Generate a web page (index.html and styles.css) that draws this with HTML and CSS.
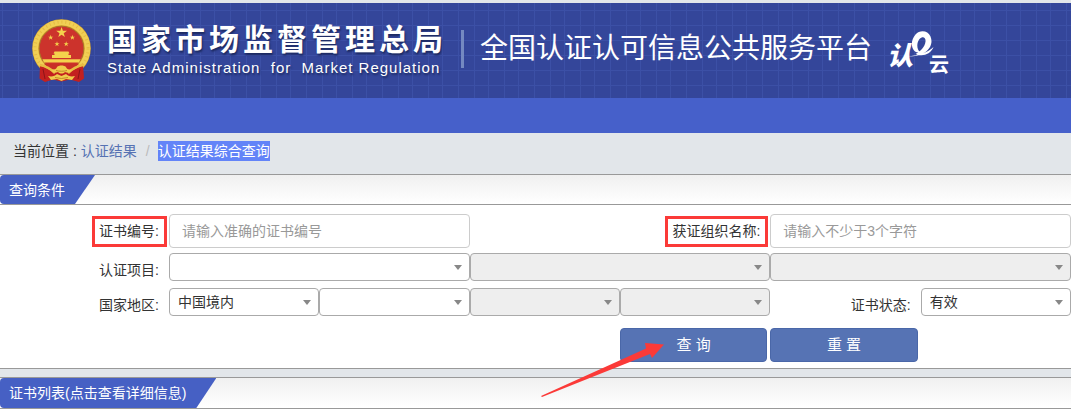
FILE: index.html
```html
<!DOCTYPE html>
<html lang="zh-CN">
<head>
  <meta charset="utf-8">
  <title>全国认证认可信息公共服务平台</title>
  <link rel="stylesheet" href="styles.css">
</head>
<body>
  <header class="banner">
    <svg class="emblem" viewBox="0 0 60 64" aria-hidden="true">
      <defs>
        <path id="star" d="M0-5.6 1.3-1.7H5.4L2.1.7 3.3 4.6 0 2.2-3.3 4.6-2.1.7-5.4-1.7H-1.3Z"/>
      </defs>
      <circle cx="29.5" cy="29.5" r="29.3" fill="#d9a62e"/>
      <circle cx="29.5" cy="29.5" r="26" fill="none" stroke="#f0cf55" stroke-width="5.5"/>
      <circle cx="29.5" cy="29.5" r="26.5" fill="none" stroke="#e6ba42" stroke-width="3" stroke-dasharray="1 3"/>
      <circle cx="29.5" cy="29.5" r="22.3" fill="#cc332c" stroke="#a8702a" stroke-width="1"/>
      <g fill="#f4d24c">
        <use href="#star" transform="translate(29.6 13.5)"/>
        <use href="#star" transform="translate(18.7 18.5) scale(.48)"/>
        <use href="#star" transform="translate(40.4 18.5) scale(.48)"/>
        <use href="#star" transform="translate(25 25) scale(.48)"/>
        <use href="#star" transform="translate(34.2 25) scale(.48)"/>
        <path d="M22.5 32.5h14l1 2h-1v1.5h2.5v3h-19v-3h2.5v-1.5h-1z"/>
        <path d="M10.500 40.200h38l-1.500 3.400h-35z"/>
      </g>
      <path d="M12 44.800h35l-6 6h-23z" fill="#c92f27"/>
      <path d="M8 45.500c4 3 8 4 13 7.500h17c5-3.500 9-4.500 13-7.500l1 14-5 3.500-9-2.500-8.500 2-8.500-2-8 2.500-5.500-3.500z" fill="#c3201f"/>
      <path d="M8 46c5 1 10 3 15 8M51 46c-5 1-10 3-15 8" fill="none" stroke="#e7bc42" stroke-width="2.500"/>
      <path d="M19 51c3-1 5 0 6-3 2-2 7-2 9 0 1 3 3 2 6 3-2 3-5 3-7 2-2 2-5 2-7 0-3 1-5 1-7-2z" fill="#f0cb4c"/>
      <path d="M16 57c4 1 7 0 9-2l4.500 2 4.500-2c2 2 5 3 9 2l-3 4-6-1-4.500 2-4.500-2-6 1z" fill="#f0cb4c"/>
      <path d="M24 51.500c3 1 8 1 11 0M23 58.500l6.500 1 6.500-1" fill="none" stroke="#b9781f" stroke-width=".8"/>
      <path d="M11 50l2 10M48 50l-2 10" stroke="#8d1418" stroke-width="1"/>
    </svg>
    <div class="agency">
      <span class="agency-cn">国家市场监督管理总局</span>
      <span class="agency-en">State Administration&nbsp; for&nbsp; Market Regulation</span>
    </div>
    <h1 class="platform">全国认证认可信息公共服务平台</h1>
    <svg class="cloud-logo" viewBox="0 0 66 48" role="img" aria-label="认e云">
      <text class="logo-ren" x="0" y="34">认</text>
      <path d="M20 25.500c7 .2 13-1 18.500-4.500 5-3.500 7.500-9.500 5-15.500-2.500-6-10.500-7-15-2-4 4.500-5 12-1.500 16 1.500 1.800 4 2.200 6 1.500-3.500-2.500-3.500-9.500-.5-13 3-3.300 6.500-2 6 2.500-.5 5.500-5.500 10-10 12.500 7 3 15 .5 18-7-5 5-14 8.500-26.500 9.500z" fill="#fff"/>
      <text class="logo-yun" x="42" y="41">云</text>
    </svg>
  </header>
  <nav class="navbar"></nav>

  <div class="breadcrumb">
    <span>当前位置 :</span>
    <a href="#">认证结果</a>
    <span class="slash">/</span>
    <span class="current">认证结果综合查询</span>
  </div>

  <section class="panel">
    <div class="panel-head"><h2 class="panel-tab">查询条件</h2></div>
    <form class="search-form">
      <div class="row">
        <label class="name" for="certNo"><span class="marked">证书编号:</span></label>
        <input class="field span2" type="text" id="certNo" placeholder="请输入准确的证书编号">
        <label class="name span2" for="orgName"><span class="marked">获证组织名称:</span></label>
        <input class="field span2" type="text" id="orgName" placeholder="请输入不少于3个字符">
      </div>
      <div class="row">
        <label class="name low" for="project">认证项目:</label>
        <select class="pick span2" id="project"><option></option></select>
        <select class="pick span2" aria-label="认证项目二级" disabled><option></option></select>
        <select class="pick span2" aria-label="认证项目三级" disabled><option></option></select>
      </div>
      <div class="row region">
        <label class="name low" for="country">国家地区:</label>
        <select class="pick" id="country"><option>中国境内</option></select>
        <select class="pick" aria-label="省"><option></option></select>
        <select class="pick" aria-label="市" disabled><option></option></select>
        <select class="pick" aria-label="县" disabled><option></option></select>
        <label class="name low" for="status">证书状态:</label>
        <select class="pick" id="status"><option>有效</option></select>
      </div>
      <div class="row actions">
        <div class="action first">
          <button class="btn" type="button">查 询</button>
          <svg class="arrow" viewBox="0 0 124 55" aria-hidden="true">
            <path d="M0 53 L105 5.500 L104 0 L123 1.500 L111 15 L109 11 L1 54 Z" fill="#fb3a38"/>
          </svg>
        </div>
        <div class="action">
          <button class="btn" type="reset">重 置</button>
        </div>
      </div>
    </form>
  </section>

  <section class="panel">
    <div class="panel-head"><h2 class="panel-tab">证书列表(点击查看详细信息)</h2></div>
  </section>
</body>
</html>
```

FILE: styles.css
```css
* {
  box-sizing: border-box;
}
body {
  margin: 0;
  padding-top: 3px;
  font-family: "Liberation Sans", "Noto Sans CJK SC", sans-serif;
  font-size: 14px;
  line-height: 20px;
  color: #333;
  background: #e2e6ea;
}
.banner {
  display: flex;
  align-items: center;
  height: 95px;
  padding: 0 0 4px 32px;
  color: #fff;
  background-color: #34469a;
  background-image:
    linear-gradient(#3c50a6 1px, transparent 1px),
    linear-gradient(90deg, #3c50a6 1px, transparent 1px 16px, #3c50a6 16px 17px, transparent 17px 30px, #3c50a6 30px 31px, transparent 31px 46px, #3c50a6 46px 47px, transparent 47px 60px, #3c50a6 60px 61px, transparent 61px);
  background-size: 100% 15px, 76px 100%;
  background-position: 0 7px, 2px 0;
}
.emblem {
  flex: none;
  width: 60px;
  height: 64px;
  margin-top: 4px;
}
.agency {
  display: flex;
  flex-direction: column;
  flex: none;
  margin-left: 15px;
  text-shadow: 1px 2px 2px #1c2960;
  white-space: nowrap;
}
.agency-cn {
  font-size: 30px;
  line-height: 38px;
  font-weight: bold;
  letter-spacing: 4px;
}
.agency-en {
  font-size: 15px;
  line-height: 18px;
  letter-spacing: 1px;
}
.platform {
  margin: 0 0 0 14px;
  padding-left: 16px;
  border-left: 3px solid #7489c1;
  font-size: 28px;
  line-height: 38px;
  font-weight: normal;
  white-space: nowrap;
}
.cloud-logo {
  flex: none;
  width: 66px;
  height: 48px;
  margin: 12px 0 0 15px;
  fill: #fff;
}
.logo-ren {
  font-size: 26px;
  font-weight: 900;
  font-style: italic;
}
.logo-yun {
  font-size: 20px;
  font-weight: bold;
}
.navbar {
  height: 35px;
  background: #4660ca;
}
.breadcrumb {
  display: flex;
  align-items: center;
  height: 41px;
  padding: 0 13px 6px;
}
.breadcrumb a {
  margin-left: 4px;
  color: #5672b3;
  text-decoration: none;
}
.slash {
  padding: 0 8px 0 9px;
  color: #bbb;
}
.current {
  color: #fff;
  background: #6384f8;
}
.panel {
  margin-bottom: 8px;
  border: 1px solid #999;
  border-width: 1px 0;
  background: #fff;
}
.panel-head {
  display: flex;
  height: 30px;
  border-bottom: 1px solid #999;
  background: linear-gradient(#f0f0f0, #fff);
}
.panel:last-child .panel-head {
  border-bottom: 0;
}
.panel-tab {
  margin: 0;
  padding: 0 30px 0 9px;
  font-size: 14px;
  line-height: 30px;
  font-weight: normal;
  color: #fff;
  background: #4660c4;
  border-radius: 4px 0 0 4px;
  clip-path: polygon(0 0, 100% 0, calc(100% - 20px) 100%, 0 100%);
}
.search-form {
  display: grid;
  padding: 9px 0 6px;
}
.row {
  display: grid;
  grid-template-columns: 169px repeat(6, minmax(0, 1fr));
}
.row + .row {
  margin-top: 5px;
}
.row.region {
  margin-top: 7px;
}
.row.actions {
  margin-top: 12px;
}
.span2 {
  grid-column: span 2;
}
.name {
  display: flex;
  justify-content: flex-end;
  align-items: center;
  padding-right: 10px;
}
.name.low {
  padding-top: 5px;
}
.marked {
  margin-right: -8px;
  padding: 2px 5px 3px 4px;
  border: 3px solid #fb3a38;
}
.field,
.pick {
  width: 100%;
  margin: 0;
  font: inherit;
  color: #333;
  background-color: #fff;
  border: 1px solid #ccc;
  border-radius: 4px;
}
.field {
  height: 34px;
  padding: 0 12px;
}
.field::placeholder {
  color: #999;
}
.pick {
  appearance: none;
  height: 28px;
  padding: 0 20px 0 8px;
  border-color: #aaa;
  background-image: url("data:image/svg+xml,%3Csvg xmlns='http://www.w3.org/2000/svg' width='8' height='5'%3E%3Cpath d='M0 0h8L4 5z' fill='%23888'/%3E%3C/svg%3E");
  background-repeat: no-repeat;
  background-position: right 7px center;
}
.pick:disabled {
  background-color: #eee;
  opacity: 1;
}
.action {
  position: relative;
  padding-right: 3px;
}
.action.first {
  grid-column: 5;
}
.btn {
  width: 100%;
  height: 34px;
  font: inherit;
  font-size: 15px;
  color: #fff;
  background: #5673b4;
  border: 1px solid #4a67a8;
  border-radius: 4px;
  cursor: pointer;
}
.arrow {
  position: absolute;
  left: -79px;
  top: 15px;
  width: 124px;
  height: 55px;
  pointer-events: none;
}
```
